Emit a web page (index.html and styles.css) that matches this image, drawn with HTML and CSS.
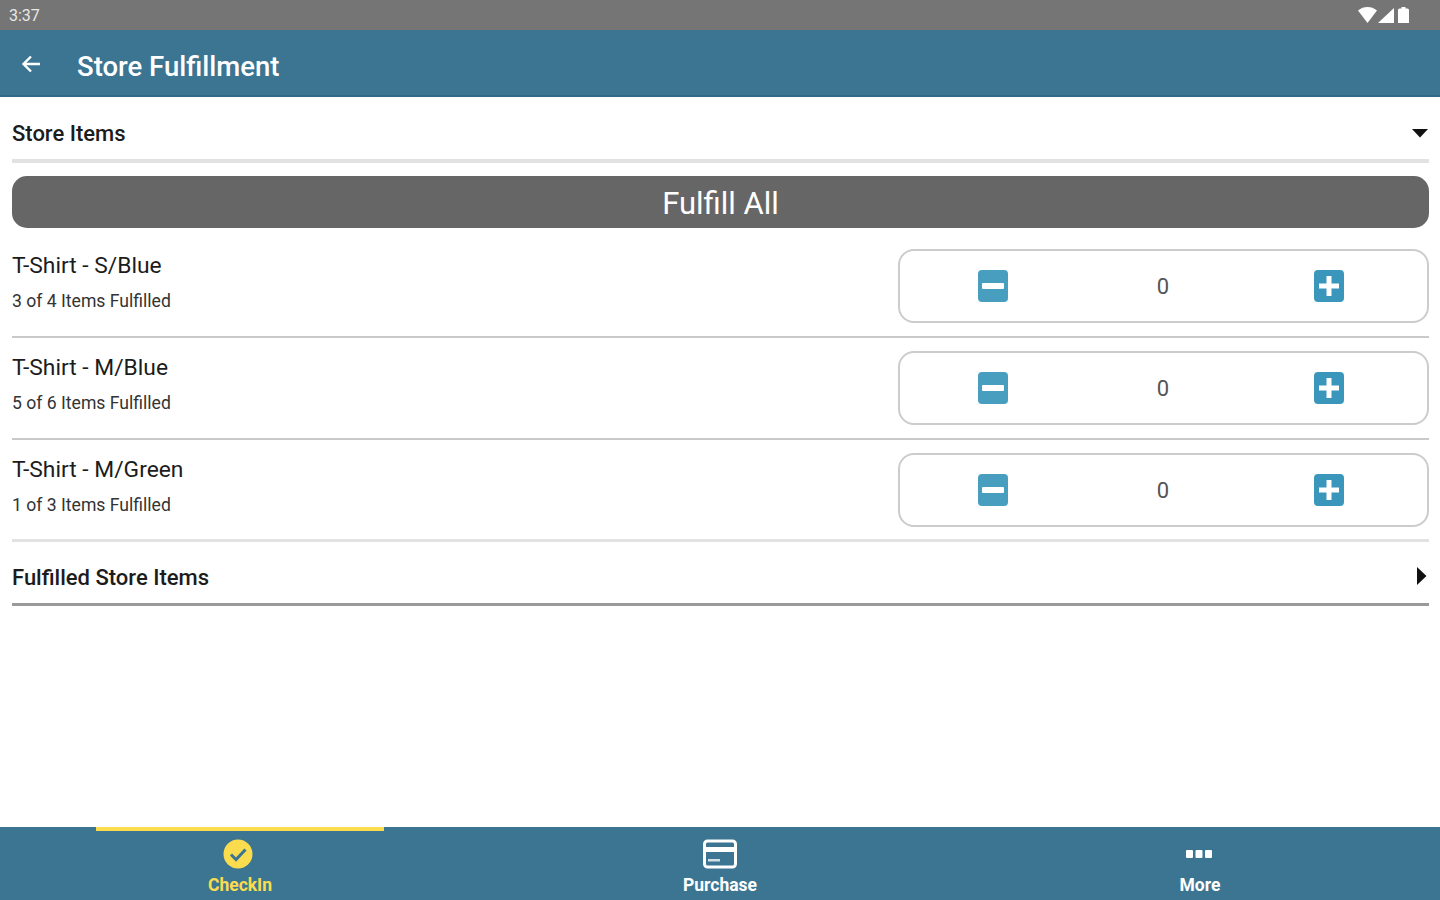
FILE: index.html
```html
<!DOCTYPE html>
<html lang="en">
<head>
    <meta charset="UTF-8">
    <meta name="viewport" content="width=device-width, initial-scale=1.0">
    <title>Store Fulfillment</title>
    <link rel="stylesheet" href="styles.css">
</head>
<body>
    <div class="status-bar">
        <span class="status-time">3:37</span>
        <svg class="status-icons" width="54" height="18" viewBox="0 0 54 18">
            <path d="M0 4.500C3 2 6 1 9.500 1S16 2 19 4.500L9.500 17z" fill="#fff"/>
            <path d="M20 17L36 2v15z" fill="#fff"/>
            <path d="M40 4q0-1.500 1.500-1.500h2V1h4v1.500h2Q51 2.500 51 4v13H40z" fill="#fff"/>
        </svg>
    </div>

    <header class="app-bar">
        <svg class="back-icon" width="22" height="22" viewBox="0 0 22 22">
            <path d="M20 11H4M11 3.500L3.500 11l7.500 7.500" fill="none" stroke="#fff" stroke-width="2.400"/>
        </svg>
        <h1>Store Fulfillment</h1>
    </header>

    <main class="content">
        <div class="section-header section-open">
            <span>Store Items</span>
            <svg width="16" height="10" viewBox="0 0 16 10"><path d="M0 1h16L8 9.500z" fill="#111"/></svg>
        </div>

        <div class="fulfill-wrap">
            <button class="fulfill-all" type="button">Fulfill All</button>
        </div>

        <div class="item-row">
            <div class="item-text">
                <div class="item-name">T-Shirt - S/Blue</div>
                <div class="item-count">3 of 4 Items Fulfilled</div>
            </div>
            <div class="stepper">
                <svg class="step-btn" viewBox="0 0 30 32"><rect width="30" height="32" rx="4" fill="#479ebf"/><rect x="4" y="13" width="22" height="6" rx="1" fill="#fff"/></svg>
                <span class="step-value">0</span>
                <svg class="step-btn" viewBox="0 0 30 32"><rect width="30" height="32" rx="4" fill="#3a97bb"/><path d="M15 6v20M5 16h20" stroke="#fff" stroke-width="5"/></svg>
            </div>
        </div>

        <div class="item-row">
            <div class="item-text">
                <div class="item-name">T-Shirt - M/Blue</div>
                <div class="item-count">5 of 6 Items Fulfilled</div>
            </div>
            <div class="stepper">
                <svg class="step-btn" viewBox="0 0 30 32"><rect width="30" height="32" rx="4" fill="#479ebf"/><rect x="4" y="13" width="22" height="6" rx="1" fill="#fff"/></svg>
                <span class="step-value">0</span>
                <svg class="step-btn" viewBox="0 0 30 32"><rect width="30" height="32" rx="4" fill="#3a97bb"/><path d="M15 6v20M5 16h20" stroke="#fff" stroke-width="5"/></svg>
            </div>
        </div>

        <div class="item-row item-row-last">
            <div class="item-text">
                <div class="item-name">T-Shirt - M/Green</div>
                <div class="item-count">1 of 3 Items Fulfilled</div>
            </div>
            <div class="stepper">
                <svg class="step-btn" viewBox="0 0 30 32"><rect width="30" height="32" rx="4" fill="#479ebf"/><rect x="4" y="13" width="22" height="6" rx="1" fill="#fff"/></svg>
                <span class="step-value">0</span>
                <svg class="step-btn" viewBox="0 0 30 32"><rect width="30" height="32" rx="4" fill="#3a97bb"/><path d="M15 6v20M5 16h20" stroke="#fff" stroke-width="5"/></svg>
            </div>
        </div>

        <div class="section-header section-closed">
            <span>Fulfilled Store Items</span>
            <svg class="closed-arrow" width="10" height="18" viewBox="0 0 10 18"><path d="M0 0v18l9.500-9z" fill="#111"/></svg>
        </div>
    </main>

    <nav class="bottom-nav">
        <div class="nav-item nav-active">
            <svg class="nav-check" width="30" height="30" viewBox="0 0 30 30">
                <circle cx="15" cy="15" r="14.500" fill="#fbdc4e"/>
                <path d="M8 15.500l5 5 9.500-10" fill="none" stroke="#3b7592" stroke-width="3"/>
            </svg>
            <span>CheckIn</span>
        </div>
        <div class="nav-item">
            <svg width="34" height="30" viewBox="0 0 34 30">
                <rect x="1.500" y="2" width="31" height="26" rx="3" fill="none" stroke="#fff" stroke-width="3"/>
                <rect x="2" y="8" width="30" height="5" fill="#fff"/>
                <rect x="5" y="20" width="12" height="2.500" fill="#cfe0e8"/>
            </svg>
            <span>Purchase</span>
        </div>
        <div class="nav-item">
            <svg class="nav-dots" width="30" height="30" viewBox="0 0 30 30">
                <rect x="2" y="11" width="7" height="8" rx="1" fill="#fff"/>
                <rect x="11.500" y="11" width="7" height="8" rx="1" fill="#fff"/>
                <rect x="21" y="11" width="7" height="8" rx="1" fill="#fff"/>
            </svg>
            <span>More</span>
        </div>
    </nav>
</body>
</html>
```

FILE: styles.css
```css
:root {
    --bar-color: #3b7592;
    --divider: #c9c9c9;
    --active-color: #fbdc4e;
}

* {
    box-sizing: border-box;
    margin: 0;
    padding: 0;
}

html, body {
    height: 900px;
    overflow: hidden;
}

body {
    display: flex;
    flex-direction: column;
    font-family: 'Roboto', sans-serif;
    background-color: #ffffff;
    color: #1c1c1c;
}

.status-bar {
    height: 30px;
    display: flex;
    align-items: center;
    justify-content: space-between;
    padding: 0 28px 0 9px;
    background-color: #757575;
    color: #e8e8e8;
    font-size: 16px;
}

.status-icons {
    display: block;
}

.app-bar {
    height: 67px;
    display: flex;
    align-items: center;
    background-color: var(--bar-color);
    border-bottom: 2px solid #2f6a86;
    color: #ffffff;
    padding-left: 20px;
}

.back-icon {
    margin-top: 2px;
}

.app-bar h1 {
    font-size: 27.5px;
    font-weight: 500;
    margin: 8px 0 0 35px;
}

.content {
    flex: 1;
    padding: 0 11px 0 12px;
}

.section-header {
    display: flex;
    align-items: center;
    justify-content: space-between;
    font-size: 22px;
    font-weight: 500;
    padding-right: 1px;
}

.section-open {
    height: 66px;
    padding-top: 10px;
    border-bottom: 4px solid #e2e2e2;
}

.section-closed {
    height: 64px;
    padding-top: 9px;
    border-bottom: 3px solid #9a9a9a;
}

.closed-arrow {
    margin: 0 1px 2px 0;
}

.fulfill-wrap {
    padding: 13px 0 8px;
}

.fulfill-all {
    display: block;
    width: 100%;
    height: 52px;
    padding-top: 2px;
    border: none;
    border-radius: 15px;
    background-color: #666666;
    color: #ffffff;
    font-family: inherit;
    font-size: 31px;
}

.item-row {
    height: 102px;
    display: flex;
    justify-content: space-between;
    padding-top: 13px;
    border-bottom: 2px solid var(--divider);
}

.item-row-last {
    border-bottom: 3px solid #e2e2e2;
}

.item-text {
    padding-top: 1px;
}

.item-name {
    font-size: 22.8px;
    line-height: 32px;
}

.item-count {
    margin-top: 7px;
    font-size: 17.6px;
    line-height: 24px;
    color: #333333;
}

.stepper {
    width: 531px;
    height: 74px;
    display: flex;
    align-items: center;
    justify-content: space-between;
    padding: 0 83px 0 78px;
    border: 2px solid #cccccc;
    border-radius: 16px;
}

.step-btn {
    width: 30px;
    height: 32px;
}

.step-value {
    margin-left: 4px;
    font-size: 22px;
    color: #555555;
}

.bottom-nav {
    height: 73px;
    display: grid;
    grid-template-columns: repeat(3, 1fr);
    background-color: var(--bar-color);
}

.nav-item {
    display: flex;
    flex-direction: column;
    align-items: center;
    padding-top: 12px;
    color: #ffffff;
    font-size: 17.5px;
    font-weight: 700;
}

.nav-item span {
    margin-top: 6px;
}

.nav-active {
    padding-top: 0;
    color: var(--active-color);
}

.nav-active::before {
    content: "";
    display: block;
    width: 60%;
    height: 4px;
    margin-bottom: 8px;
    background-color: var(--active-color);
}

.nav-check {
    margin-right: 4px;
}

.nav-dots {
    margin-right: 2px;
}
```
